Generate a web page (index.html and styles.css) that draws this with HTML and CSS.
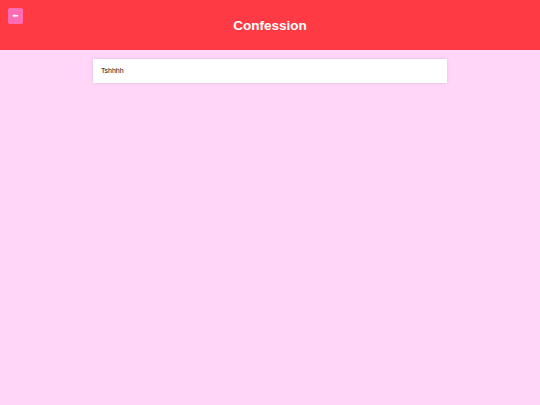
FILE: index.html
```html
<!DOCTYPE html>
<html>
<head>
<meta charset="utf-8">
<link rel="stylesheet" href="styles.css">
</head>
<body>
<header class="header">
  <button class="back">&#11013;</button>
  <h1 class="title">Confession</h1>
</header>
<main class="main">
  <div class="card">Tshhhh</div>
</main>
</body>
</html>
```
FILE: styles.css
```css
html, body { margin: 0; padding: 0; }
body {
  background: #ffd6f7;
  font-family: "Liberation Sans", Arial, sans-serif;
  width: 540px;
  height: 405px;
  overflow: hidden;
}
.header {
  position: relative;
  height: 50px;
  background: #fe3b44;
  display: flex;
  align-items: center;
  justify-content: center;
}
.back {
  position: absolute;
  left: 8px;
  top: 8px;
  width: 15px;
  height: 16px;
  padding: 0;
  border: none;
  border-radius: 2px;
  background: #ff6bb4;
  color: #fff;
  font-size: 7px;
  line-height: 16px;
  font-family: "DejaVu Sans", sans-serif;
}
.title {
  margin: 0;
  color: #fff;
  font-size: 13.5px;
  font-weight: bold;
}
.main {
  display: flex;
  justify-content: center;
  padding-top: 9px;
}
.card {
  width: 338px;
  height: 24px;
  padding: 0 8px;
  background: #fff;
  box-shadow: 0 0 3px rgba(0,0,0,0.12);
  font-size: 7px;
  line-height: 24px;
  color: #111;
}
```
